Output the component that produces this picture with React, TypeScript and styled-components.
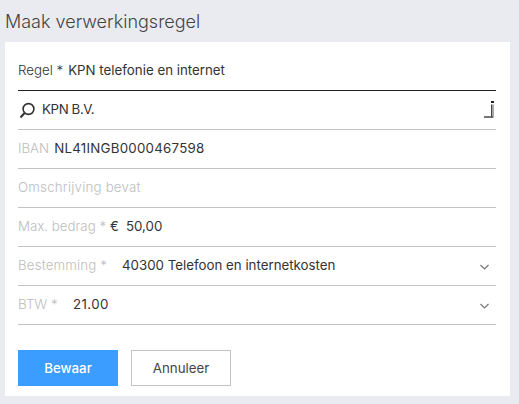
import { createGlobalStyle } from "styled-components";
import styled from "styled-components";

const GlobalStyle = createGlobalStyle`
  html, body {
    margin: 0;
    padding: 0;
    height: 404px;
    overflow: hidden;
    background: #eaebf0;
    font-family: Inter, "Liberation Sans", sans-serif;
  }
`;

const Page = styled.div`
  width: 519px;
  height: 404px;
  padding: 0 9px 8px 5px;
  box-sizing: border-box;
  display: flex;
  flex-direction: column;
`;

const Title = styled.h1`
  margin: 0;
  height: 42px;
  line-height: 44px;
  font-size: 18px;
  font-weight: 300;
  color: #444;
`;

const Panel = styled.div`
  flex: 1;
  background: #fff;
  padding: 10px 14px 0 13px;
`;

const Row = styled.div<{ $strong?: boolean }>`
  height: 39px;
  box-sizing: border-box;
  display: flex;
  align-items: center;
  gap: 5px;
  font-size: 13.3px;
  color: #333;
  border-bottom: 1px solid ${(p) => (p.$strong ? "#222" : "#c4c4c4")};
  padding-bottom: 2px;
`;

const Label = styled.span<{ $dark?: boolean; $width?: number; $tracking?: number }>`
  color: ${(p) => (p.$dark ? "#333" : "#bdbdbd")};
  ${(p) => (p.$width ? `width: ${p.$width}px;` : "")}
  flex-shrink: 0;
  font-weight: 300;
  letter-spacing: ${(p) => p.$tracking ?? 0}px;
`;

const Value = styled.span<{ $tracking?: number }>`
  flex: 1;
  letter-spacing: ${(p) => p.$tracking ?? 0}px;
`;

const Currency = styled.span`
  margin: 0 7px 0 -1px;
`;

const Chevron = styled.svg`
  width: 9px;
  height: 6px;
  margin-right: 7px;
  margin-top: 3px;
`;

const InfoMark = styled.svg`
  width: 13px;
  height: 20px;
  margin-top: 2px;
`;

const Actions = styled.div`
  display: flex;
  gap: 13px;
  margin-top: 25px;
`;

const Button = styled.button<{ $primary?: boolean }>`
  width: 100px;
  height: 36px;
  box-sizing: border-box;
  border: 1px solid ${(p) => (p.$primary ? "#3a9dff" : "#c4c4c4")};
  background: ${(p) => (p.$primary ? "#3a9dff" : "#fff")};
  color: ${(p) => (p.$primary ? "#fff" : "#444")};
  font-family: inherit;
  font-size: 13.3px;
  font-weight: ${(p) => (p.$primary ? 500 : 400)};
  padding: 0;
`;

const Arrow = () => (
  <Chevron viewBox="0 0 9 6">
    <path d="M0.5 1 L4.5 5 L8.5 1" fill="none" stroke="#777" strokeWidth="1.2" />
  </Chevron>
);

export default function App() {
  return (
    <Page>
      <GlobalStyle />
      <Title>Maak verwerkingsregel</Title>
      <Panel>
        <Row $strong>
          <Label $dark>Regel *</Label>
          <Value>KPN telefonie en internet</Value>
        </Row>
        <Row>
          <svg width="19" height="19" viewBox="0 0 19 19" style={{ marginTop: 2 }}>
            <circle cx="10.5" cy="8" r="5.4" fill="none" stroke="#333" strokeWidth="1.6" />
            <path d="M6.6 12 L2.5 16.5" stroke="#333" strokeWidth="2" />
          </svg>
          <Value $tracking={-0.4}>KPN B.V.</Value>
          <InfoMark viewBox="0 0 13 20">
            <rect x="8" y="1" width="3" height="2" fill="#222" />
            <rect x="8" y="4.5" width="1.5" height="13" fill="#444" />
            <rect x="9.5" y="4.5" width="1.5" height="13" fill="#aaa" />
            <path d="M1 17 H10" stroke="#555" strokeWidth="1.6" />
          </InfoMark>
        </Row>
        <Row>
          <Label>IBAN</Label>
          <Value $tracking={0.25}>NL41INGB0000467598</Value>
        </Row>
        <Row>
          <Label $tracking={0.2}>Omschrijving bevat</Label>
        </Row>
        <Row>
          <Label>Max. bedrag *</Label>
          <Value>
            <Currency>€</Currency>50,00
          </Value>
        </Row>
        <Row>
          <Label $width={99} $tracking={0.15}>Bestemming *</Label>
          <Value>40300 Telefoon en internetkosten</Value>
          <Arrow />
        </Row>
        <Row>
          <Label $width={50}>BTW *</Label>
          <Value $tracking={0.4}>21.00</Value>
          <Arrow />
        </Row>
        <Actions>
          <Button $primary>Bewaar</Button>
          <Button>Annuleer</Button>
        </Actions>
      </Panel>
    </Page>
  );
}
